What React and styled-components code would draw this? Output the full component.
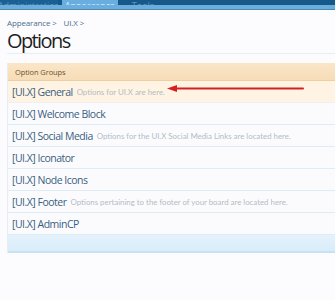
import React from "react";
import styled, { createGlobalStyle } from "styled-components";

const Global = createGlobalStyle`
  html, body { margin: 0; padding: 0; background: #fcfcff; }
  body { font-family: "Open Sans", sans-serif; width: 335px; height: 300px; overflow: hidden; }
`;

const Page = styled.div`
  width: 335px;
  height: 300px;
  background: #fcfcff;
  overflow: hidden;
`;

const Nav = styled.div`
  height: 5px;
  background: #165887;
  display: flex;
  align-items: flex-end;
  overflow: hidden;
`;

const Tab = styled.div`
  flex: none;
  width: ${(p) => p.$w}px;
  margin-right: ${(p) => p.$gap}px;
  height: 5px;
  display: flex;
  align-items: flex-end;
  justify-content: center;
  font-size: 9px;
  line-height: 9px;
  white-space: nowrap;
  overflow: hidden;
  color: ${(p) => (p.$active ? "#d8ecfa" : "#5f92ba")};
  background: ${(p) => (p.$active ? "#6aaddf" : p.$dim ? "#1b6092" : "transparent")};
`;

const TabLabel = styled.span`
  display: block;
  transform: translateY(5px);
`;

const Strip = styled.div`
  height: 4px;
  background: #6aaddf;
  border-bottom: 1px solid #4f87a8;
`;

const Content = styled.div`
  padding-left: 7px;
`;

const Crumbs = styled.div`
  display: flex;
  gap: 7px;
  padding-top: 7px;
  height: 12px;
  font-size: 8px;
  letter-spacing: -0.15px;
  color: #4d6f8c;
  line-height: 12px;
`;

const Title = styled.h1`
  margin: 0;
  font-weight: 400;
  font-size: 20px;
  letter-spacing: -1.6px;
  line-height: 24px;
  height: 23px;
  color: #1e1e1e;
`;

const Rule = styled.div`
  height: 1px;
  background: #e3f0f6;
  margin-top: 1px;
`;

const List = styled.div`
  margin-top: 9px;
  border-left: 1px solid #e6eef4;
`;

const Header = styled.div`
  height: 17px;
  padding-left: 7px;
  display: flex;
  align-items: center;
  font-size: 7.5px;
  letter-spacing: -0.1px;
  color: #6b5232;
  background: linear-gradient(#fae6c8, #f7dcb8);
  border-bottom: 1px solid #efcf9f;
`;

const Row = styled.div`
  position: relative;
  height: 21px;
  padding-left: 4px;
  display: flex;
  align-items: center;
  gap: 4px;
  background: ${(p) => (p.$hl ? "#fff3e3" : "#fbfbfe")};
  border-bottom: 1px solid ${(p) => (p.$hl ? "#eef0f3" : "#dcedf5")};
  white-space: nowrap;
`;

const Name = styled.span`
  font-size: 10.5px;
  letter-spacing: -0.5px;
  color: #3a5f80;
`;

const Desc = styled.span`
  font-family: Lato, "Open Sans", sans-serif;
  font-size: 7.85px;
  color: #b3bcc5;
`;

const Arrow = styled.svg`
  position: absolute;
  left: 158px;
  top: 2px;
`;

const Footer = styled.div`
  height: 16px;
  background: linear-gradient(#e4f2fc, #d8ecf9);
  border-bottom: 2px solid #c8e2f1;
`;

const rows = [
  { name: "[UI.X] General", desc: "Options for UI.X are here.", hl: true },
  { name: "[UI.X] Welcome Block" },
  { name: "[UI.X] Social Media", desc: "Options for the UI.X Social Media Links are located here." },
  { name: "[UI.X] Iconator" },
  { name: "[UI.X] Node Icons" },
  { name: "[UI.X] Footer", desc: "Options pertaining to the footer of your board are located here." },
  { name: "[UI.X] AdminCP" },
];

export default function App() {
  return (
    <Page>
      <Global />
      <Nav>
        <Tab $w={58} $gap={4} $dim><TabLabel>Administration</TabLabel></Tab>
        <Tab $w={56} $gap={8} $active><TabLabel>Appearance</TabLabel></Tab>
        <Tab $w={34} $gap={0}><TabLabel>Tools</TabLabel></Tab>
      </Nav>
      <Strip />
      <Content>
        <Crumbs>
          <span>Appearance &gt;</span>
          <span>UI.X &gt;</span>
        </Crumbs>
        <Title>Options</Title>
        <Rule />
        <List>
          <Header>Option Groups</Header>
          {rows.map((r) => (
            <Row key={r.name} $hl={r.hl}>
              <Name>{r.name}</Name>
              {r.desc && <Desc>{r.desc}</Desc>}
              {r.hl && (
                <Arrow width="140" height="12" viewBox="0 0 140 12">
                  <line x1="10" y1="5.5" x2="137" y2="5.5" stroke="#d42020" strokeWidth="2" strokeLinecap="round" />
                  <polygon points="1,5.5 11,2 11,9" fill="#d42020" />
                </Arrow>
              )}
            </Row>
          ))}
          <Footer />
        </List>
      </Content>
    </Page>
  );
}
